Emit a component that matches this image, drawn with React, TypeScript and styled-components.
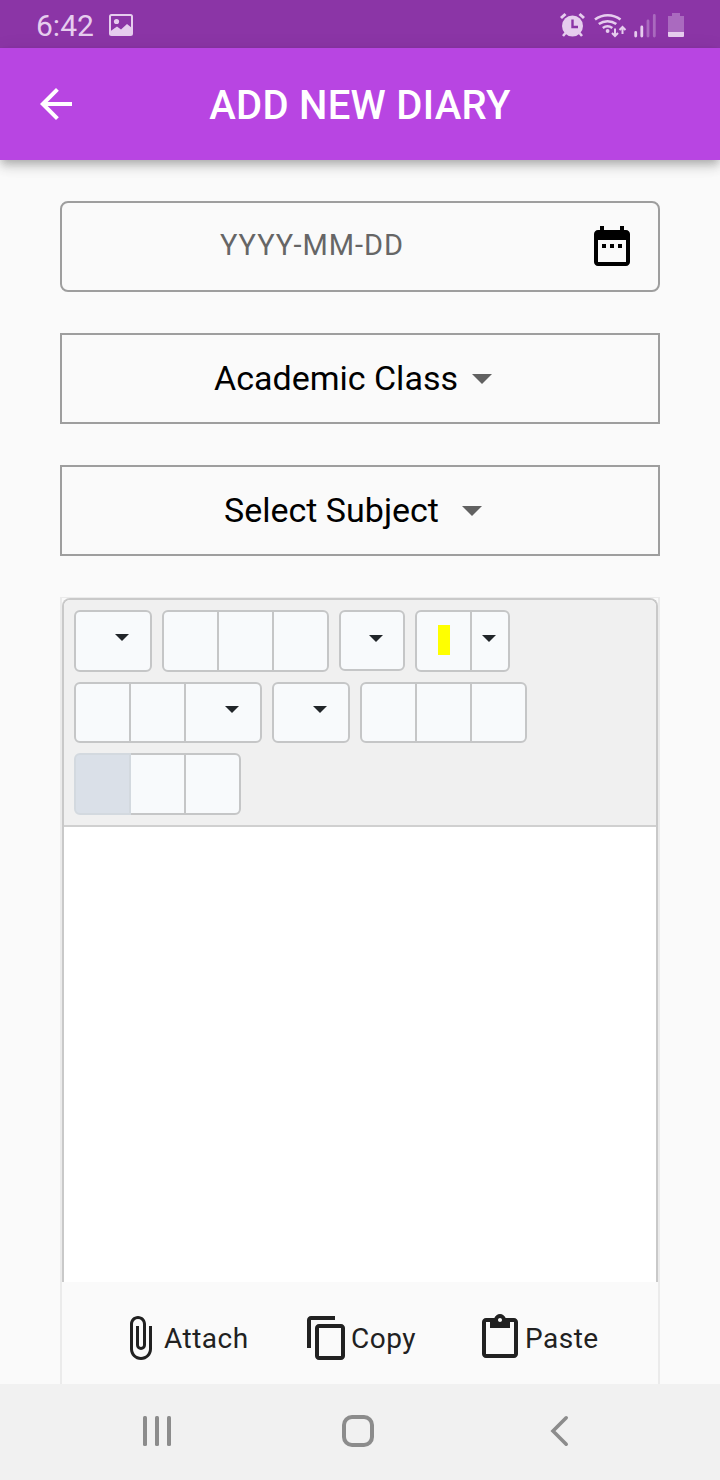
import React from "react";
import styled, { createGlobalStyle } from "styled-components";

const GlobalStyle = createGlobalStyle`
  * { box-sizing: border-box; }
  body { margin: 0; background: #fafafa; font-family: Roboto, "Liberation Sans", sans-serif; }
  svg { display: block; flex: none; }
`;

const Screen = styled.div`
  width: 720px;
  height: 1480px;
  display: flex;
  flex-direction: column;
  background: #fafafa;
  overflow: hidden;
`;

const StatusBar = styled.header`
  height: 48px;
  flex: none;
  display: flex;
  align-items: center;
  padding: 2px 34px 0 36px;
  background: #8b35a6;
  color: #e6cdee;
`;

const Clock = styled.span`
  width: 73px;
  padding-top: 2px;
  font-size: 30px;
  line-height: 44px;
`;

const StatusIcons = styled.div`
  margin-left: auto;
  display: flex;
`;

const AppBar = styled.div`
  height: 112px;
  flex: none;
  display: flex;
  align-items: center;
  padding: 0 32px;
  background: #b845e2;
  color: #fff;
  z-index: 1;
  box-shadow: 0 4px 8px -2px rgba(0, 0, 0, 0.2), 0 8px 10px 0 rgba(0, 0, 0, 0.12),
    0 2px 18px 0 rgba(0, 0, 0, 0.08);
`;

const Title = styled.h1`
  flex: 1;
  margin: 3px 48px 0 0;
  font-size: 40px;
  line-height: 47px;
  font-weight: 500;
  letter-spacing: 0.3px;
  text-align: center;
  white-space: nowrap;
`;

const Form = styled.main`
  flex: 1;
  min-height: 0;
  display: flex;
  flex-direction: column;
  padding: 41px 60px 0;
`;

const Field = styled.div<{ $rounded?: boolean }>`
  height: 91px;
  flex: none;
  display: flex;
  align-items: center;
  border: 2px solid #9e9e9e;
  border-radius: ${(p) => (p.$rounded ? "8px" : "0")};
  margin-bottom: 41px;
  color: #000;
`;

const DateHint = styled.span`
  flex: 1;
  padding: 0 0 3px 158px;
  font-size: 29px;
  letter-spacing: 0.95px;
  color: #666;
`;

const CalendarButton = styled.span`
  padding: 0 22px 2px 0;
`;

const SelectLabel = styled.span<{ $start: number; $width: number }>`
  margin-left: ${(p) => p.$start}px;
  width: ${(p) => p.$width}px;
  padding-bottom: 2px;
  font-size: 34px;
  white-space: nowrap;
`;

const Editor = styled.section`
  flex: 1;
  min-height: 0;
  display: flex;
  flex-direction: column;
  border: solid #ebebeb;
  border-width: 1px 2px 0;
`;

const EditorFrame = styled.div`
  height: 684px;
  flex: none;
  display: flex;
  flex-direction: column;
  border: 2px solid #c9c9c9;
  border-bottom: 0;
  border-radius: 8px 8px 0 0;
  background: #fff;
  overflow: hidden;
`;

const Toolbar = styled.div`
  height: 227px;
  flex: none;
  padding: 10px;
  border-bottom: 2px solid #d0d0d0;
  background: #f0f0f0;
`;

const ToolRow = styled.div<{ $height: number }>`
  display: flex;
  align-items: flex-start;
  gap: 10px;
  height: ${(p) => p.$height}px;
  margin-bottom: 10px;
`;

const ToolGroup = styled.div<{ $height?: number }>`
  display: flex;
  height: ${(p) => (p.$height ? `${p.$height}px` : "100%")};
`;

const ToolButton = styled.button<{ $width?: number; $active?: boolean; $caret?: number; $drop?: number }>`
  width: ${(p) => p.$width ?? 57}px;
  display: flex;
  align-items: flex-start;
  padding: ${(p) => (p.$caret ? `${p.$drop ?? 22}px 0 0 ${p.$caret}px` : "0")};
  border: 2px solid ${(p) => (p.$active ? "#d3d9df" : "#c5c6c7")};
  background: ${(p) => (p.$active ? "#dae0e8" : "#f8fafc")};
  position: relative;
  z-index: ${(p) => (p.$active ? 1 : 0)};
  & + & { margin-left: -2px; }
  &:first-child { border-top-left-radius: 6px; border-bottom-left-radius: 6px; }
  &:last-child { border-top-right-radius: 6px; border-bottom-right-radius: 6px; }
`;

const Swatch = styled.span`
  width: 12px;
  height: 30px;
  margin: 13px 0 0 21px;
  background: #ff0;
`;

const Actions = styled.div`
  display: flex;
  padding: 32px 0 0 54px;
  color: #212121;
`;

const Action = styled.div<{ $width: number; $gap?: number }>`
  width: ${(p) => p.$width}px;
  display: flex;
  align-items: center;
  gap: ${(p) => p.$gap ?? 0}px;
  font-size: 28px;
  line-height: 46px;
  letter-spacing: 0.5px;
`;

const ActionLabel = styled.span`
  padding-top: 2px;
`;

const NavBar = styled.nav`
  height: 96px;
  flex: none;
  display: flex;
  align-items: center;
  padding: 0 0 2px 141px;
  background: #f1f1f1;
`;

const NavKey = styled.span<{ $width: number }>`
  width: ${(p) => p.$width}px;
`;

const MaterialIcon = ({ d }: { d: string }) => (
  <svg width="48" height="48" viewBox="0 0 24 24" fill="currentColor">
    <path d={d} />
  </svg>
);

const icons = {
  back: "M20 11H7.83l5.59-5.59L12 4l-8 8 8 8 1.41-1.41L7.83 13H20v-2z",
  date: "M9 11H7v2h2v-2zm4 0h-2v2h2v-2zm4 0h-2v2h2v-2zm2-7h-1V2h-2v2H8V2H6v2H5c-1.11 0-1.99.9-1.99 2L3 20c0 1.1.89 2 2 2h14c1.1 0 2-.9 2-2V6c0-1.1-.9-2-2-2zm0 16H5V9h14v11z",
  attach:
    "M16.5 6v11.5c0 2.21-1.79 4-4 4s-4-1.79-4-4V5a2.5 2.5 0 0 1 5 0v10.5c0 .55-.45 1-1 1s-1-.45-1-1V6H10v9.5a2.5 2.5 0 0 0 5 0V5c0-2.21-1.79-4-4-4S7 2.79 7 5v12.5c0 3.04 2.46 5.5 5.5 5.5s5.5-2.46 5.5-5.5V6h-1.5z",
  copy: "M16 1H4c-1.1 0-2 .9-2 2v14h2V3h12V1zm3 4H8c-1.1 0-2 .9-2 2v14c0 1.1.9 2 2 2h11c1.1 0 2-.9 2-2V7c0-1.1-.9-2-2-2zm0 16H8V7h11v14z",
  paste:
    "M19 2h-4.18C14.4.84 13.3 0 12 0c-1.3 0-2.4.84-2.82 2H5c-1.1 0-2 .9-2 2v16c0 1.1.9 2 2 2h14c1.1 0 2-.9 2-2V4c0-1.1-.9-2-2-2zm-7 0c.55 0 1 .45 1 1s-.45 1-1 1-1-.45-1-1 .45-1 1-1zm7 18H5V4h2v3h10V4h2v16z",
};

const DropArrow = () => (
  <svg width="20" height="10" viewBox="0 0 20 10" fill="#616161">
    <path d="M0 0h20L10 10z" />
  </svg>
);

const Caret = () => (
  <svg width="14" height="7" viewBox="0 0 14 7" fill="#212529">
    <path d="M0 0h14L7 7z" />
  </svg>
);

const PictureIcon = () => (
  <svg width="24" height="22" viewBox="0 0 24 22">
    <rect x="1" y="1" width="22" height="20" rx="1.5" fill="none" stroke="currentColor" strokeWidth="2" />
    <circle cx="7.5" cy="7.5" r="2.6" fill="currentColor" />
    <path d="M1 17.5l7-5 4 3 6-5.500 5 4V21H1z" fill="currentColor" />
  </svg>
);

const StatusGlyphs = () => (
  <svg width="128" height="28" viewBox="558 11 128 28" fill="none" stroke="currentColor">
    <circle cx="572.500" cy="26" r="10.500" fill="currentColor" stroke="none" />
    <path d="M561 18l4.500-4M584 18l-4.500-4" strokeWidth="3" />
    <path d="M565.500 33l-2.500 3M579.500 33l2.500 3" strokeWidth="2.600" />
    <path d="M572.500 19.500V27h5.500" stroke="#8b35a6" strokeWidth="2.400" />
    <path d="M595 19.500a21 21 0 0 1 25.500 0M598.800 24a15 15 0 0 1 17.500 0M602.800 28a8 8 0 0 1 9.500 0" strokeWidth="2.600" />
    <circle cx="607.600" cy="31" r="1.900" fill="currentColor" stroke="none" />
    <path d="M615 28.500v7M612 33l3 3 3-3M622.500 34v-7M619.500 30l3-3 3 3" strokeWidth="2" />
    <path d="M635.700 32.500v3.500M641.800 27v9" strokeWidth="2.800" strokeLinecap="round" />
    <path d="M648 21v15M654.300 15.500V36" strokeWidth="2.800" strokeLinecap="round" opacity="0.35" />
    <path d="M672 13h8v3h4v16h-16V16h4z" fill="currentColor" stroke="none" opacity="0.35" />
    <path d="M668 32h16v4q0 1-1 1h-14q-1 0-1-1z" fill="currentColor" stroke="none" />
  </svg>
);

export default function App() {
  return (
    <Screen>
      <GlobalStyle />
      <StatusBar>
        <Clock>6:42</Clock>
        <PictureIcon />
        <StatusIcons>
          <StatusGlyphs />
        </StatusIcons>
      </StatusBar>
      <AppBar>
        <MaterialIcon d={icons.back} />
        <Title>ADD NEW DIARY</Title>
      </AppBar>
      <Form>
        <Field $rounded>
          <DateHint>YYYY-MM-DD</DateHint>
          <CalendarButton>
            <MaterialIcon d={icons.date} />
          </CalendarButton>
        </Field>
        <Field>
          <SelectLabel $start={152} $width={258}>Academic Class</SelectLabel>
          <DropArrow />
        </Field>
        <Field>
          <SelectLabel $start={162} $width={238}>Select Subject</SelectLabel>
          <DropArrow />
        </Field>
        <Editor>
          <EditorFrame>
            <Toolbar>
              <ToolRow $height={62}>
                <ToolGroup>
                  <ToolButton $width={78} $caret={39}><Caret /></ToolButton>
                </ToolGroup>
                <ToolGroup>
                  <ToolButton />
                  <ToolButton />
                  <ToolButton />
                </ToolGroup>
                <ToolGroup $height={61}>
                  <ToolButton $width={66} $caret={28} $drop={23}><Caret /></ToolButton>
                </ToolGroup>
                <ToolGroup>
                  <ToolButton><Swatch /></ToolButton>
                  <ToolButton $width={40} $caret={10} $drop={23}><Caret /></ToolButton>
                </ToolGroup>
              </ToolRow>
              <ToolRow $height={61}>
                <ToolGroup>
                  <ToolButton />
                  <ToolButton />
                  <ToolButton $width={78} $caret={39}><Caret /></ToolButton>
                </ToolGroup>
                <ToolGroup>
                  <ToolButton $width={78} $caret={39}><Caret /></ToolButton>
                </ToolGroup>
                <ToolGroup>
                  <ToolButton />
                  <ToolButton />
                  <ToolButton />
                </ToolGroup>
              </ToolRow>
              <ToolRow $height={62}>
                <ToolGroup>
                  <ToolButton $active />
                  <ToolButton />
                  <ToolButton />
                </ToolGroup>
              </ToolRow>
            </Toolbar>
          </EditorFrame>
          <Actions>
            <Action $width={187}>
              <MaterialIcon d={icons.attach} />
              <ActionLabel>Attach</ActionLabel>
            </Action>
            <Action $width={173}>
              <MaterialIcon d={icons.copy} />
              <ActionLabel>Copy</ActionLabel>
            </Action>
            <Action $width={140} $gap={1}>
              <MaterialIcon d={icons.paste} />
              <ActionLabel>Paste</ActionLabel>
            </Action>
          </Actions>
        </Editor>
      </Form>
      <NavBar>
        <NavKey $width={201}>
          <svg width="32" height="32" fill="#8c8c8c">
            <rect x="2" y="1" width="4" height="30" rx="1.500" />
            <rect x="14" y="1" width="4" height="30" rx="1.500" />
            <rect x="26" y="1" width="4" height="30" rx="1.500" />
          </svg>
        </NavKey>
        <NavKey $width={208}>
          <svg width="32" height="32" fill="none" stroke="#8c8c8c" strokeWidth="4">
            <rect x="2" y="2" width="28" height="28" rx="8" />
          </svg>
        </NavKey>
        <NavKey $width={20}>
          <svg width="20" height="32" fill="none" stroke="#8c8c8c" strokeWidth="3.600" strokeLinecap="round">
            <path d="M16.200 2.800L3 16l13.200 13.200" />
          </svg>
        </NavKey>
      </NavBar>
    </Screen>
  );
}
